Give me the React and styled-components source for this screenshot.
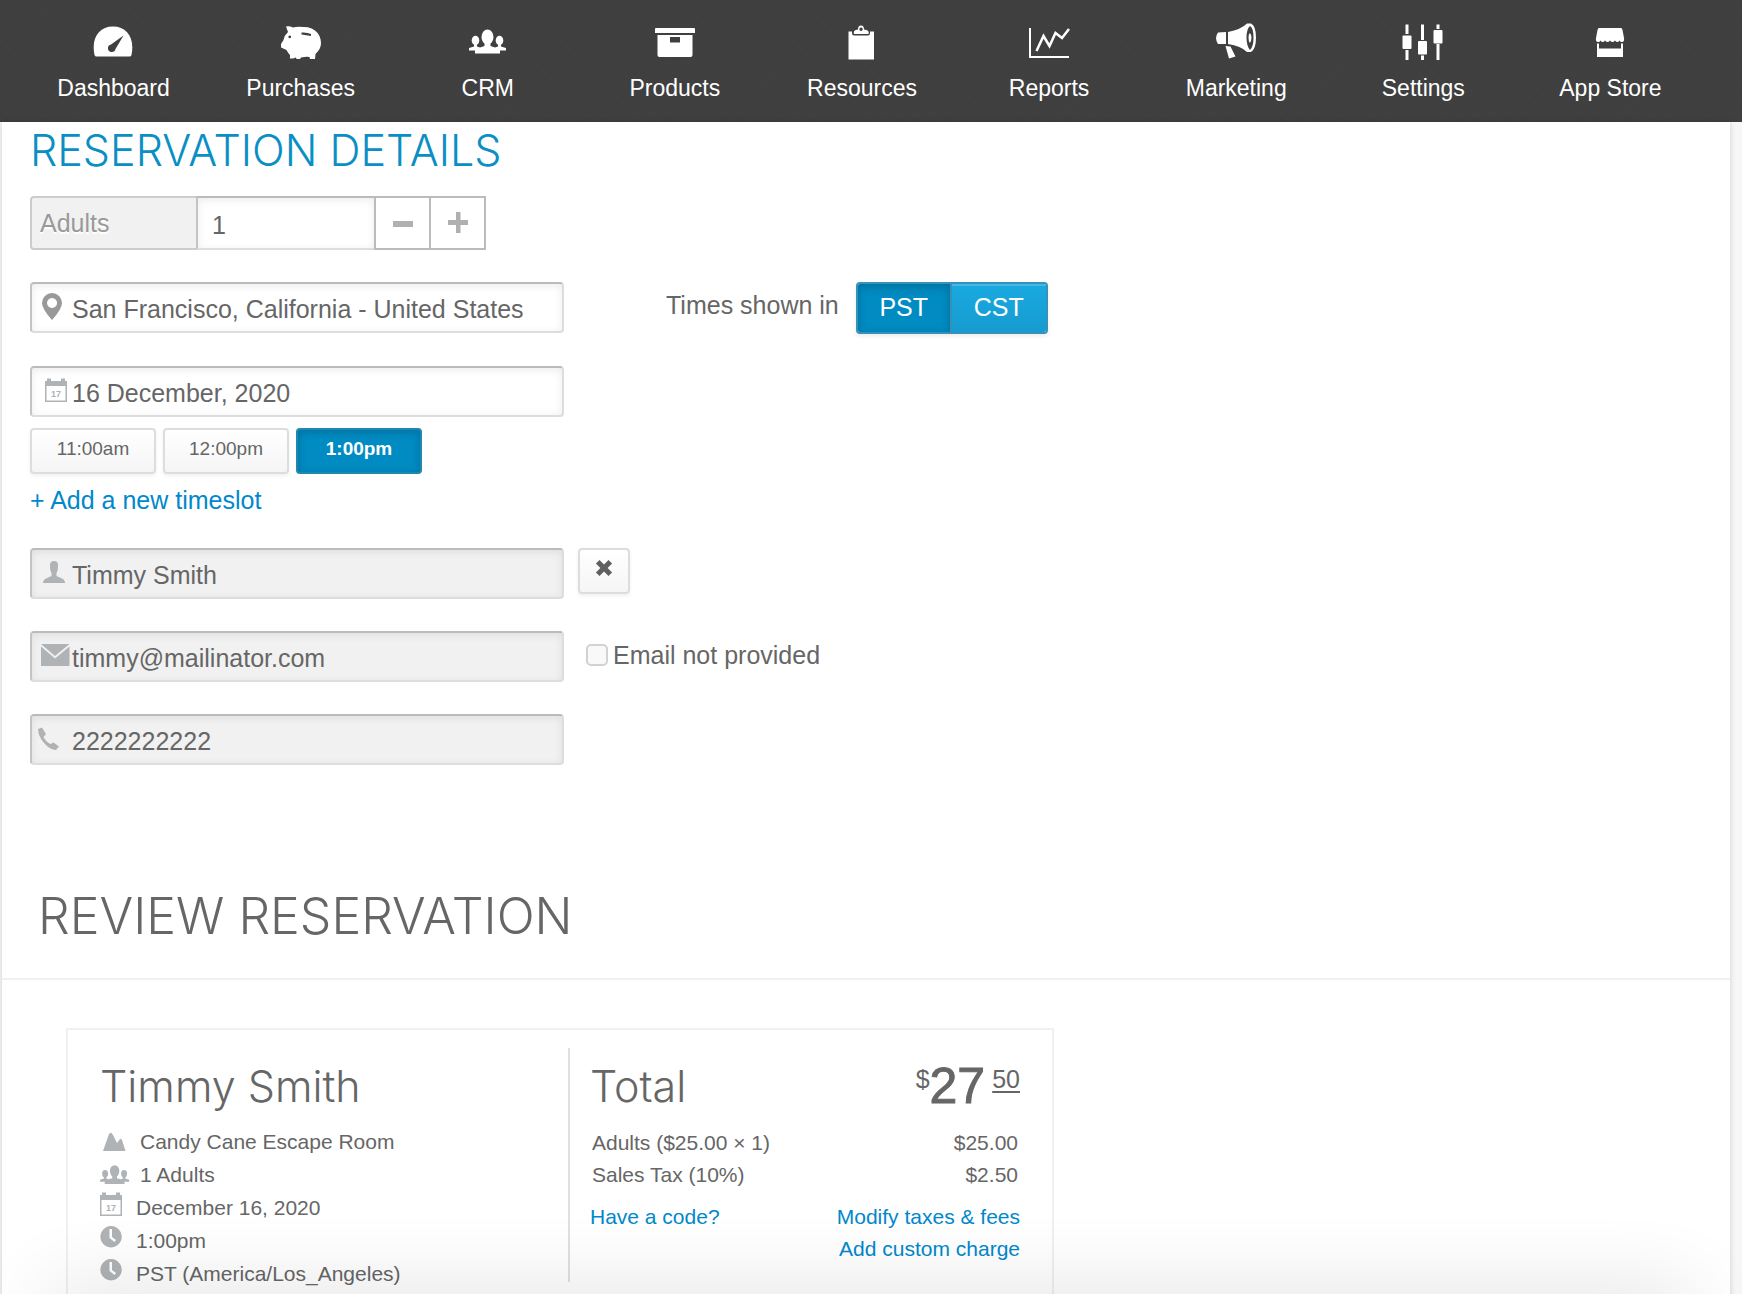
import React, { useId, useState } from 'react';
import styled, { createGlobalStyle, css } from 'styled-components';

const GlobalStyle = createGlobalStyle`
  * {
    box-sizing: border-box;
  }
  body {
    margin: 0;
    background: #f7f7f7;
    color: #666;
    font-family: 'Liberation Sans', Arial, sans-serif;
    font-size: 25px;
    line-height: 32px;
  }
  button, input {
    font-family: inherit;
    font-size: inherit;
    color: inherit;
  }
  a {
    color: #0088cc;
    text-decoration: none;
  }
`;

const Page = styled.div`
  height: 100vh;
  overflow: hidden;
  display: flex;
  flex-direction: column;
`;

const Nav = styled.nav`
  display: flex;
  flex: none;
  height: 122px;
  padding: 0 38px 0 20px;
  background-color: #3f3f3f;
  background-image:
    repeating-linear-gradient(45deg, rgba(255, 255, 255, 0.01) 0 1px, transparent 1px 3px),
    repeating-linear-gradient(-45deg, rgba(0, 0, 0, 0.02) 0 1px, transparent 1px 4px);
`;

const NavLink = styled.a`
  flex: 1;
  display: flex;
  flex-direction: column;
  align-items: center;
  gap: 10px;
  padding-top: 18px;
  color: #fff;
  font-size: 23px;
  svg {
    width: 44px;
    height: 44px;
    fill: #fff;
  }
`;

const Panel = styled.main`
  flex: none;
  margin: 0 12px 0 2px;
  background: #fff;
  box-shadow: 0 0 6px rgba(0, 0, 0, 0.16);
`;

const Details = styled.section`
  display: flex;
  flex-direction: column;
  align-items: flex-start;
  padding: 0 28px;
`;

const Heading = styled.h2`
  margin: 0;
  font-family: Inter, 'Open Sans', sans-serif;
  font-weight: 300;
  font-size: ${p => (p.$large ? '50px' : '43px')};
  line-height: 56px;
  color: ${p => (p.$accent ? '#0a8fc4' : '#666')};
`;

const Line = styled.div`
  display: flex;
  align-items: flex-start;
  gap: ${p => p.$gap || 0}px;
  margin-top: ${p => p.$top}px;
`;

const boxBorder = css`
  border: 2px solid #ddd;
  border-top-color: #bbb;
  border-left-color: #c4c4c4;
  border-radius: 4px;
  box-shadow: inset 0 2px 8px rgba(0, 0, 0, 0.08);
`;

const Field = styled.label`
  ${boxBorder}
  display: flex;
  align-items: center;
  width: 534px;
  height: 51px;
  padding: 0 10px 0 8px;
  background: ${p => (p.$filled ? '#f1f1f1' : '#fff')};
  svg {
    flex: none;
    overflow: visible;
    width: 32px;
    height: 32px;
    margin-bottom: 4px;
    fill: ${p => p.$tone || '#afb3b6'};
  }
  input {
    flex: 1;
    min-width: 0;
    height: 40px;
    margin-top: 4px;
    padding: 0;
    border: 0;
    outline: 0;
    background: none;
  }
`;

const Counter = styled.div`
  display: flex;
  height: 54px;
  label {
    width: 168px;
    padding: 9px 8px;
    border: 2px solid #ccc;
    border-radius: 4px 0 0 4px;
    background: #f1f1f1;
    color: #999;
    text-shadow: 0 2px 0 #fff;
  }
  input {
    ${boxBorder}
    width: 180px;
    margin-left: -2px;
    padding: 4px 14px 0;
    border-radius: 0;
    outline: 0;
  }
`;

const StepButton = styled.button`
  display: flex;
  align-items: center;
  justify-content: center;
  width: 57px;
  margin-left: -2px;
  padding: 0;
  border: 2px solid #bbb;
  background: #fff;
  svg {
    width: 20px;
    height: 24px;
    fill: #b0b0b0;
  }
`;

const PlainButton = styled.button`
  display: flex;
  align-items: center;
  justify-content: center;
  min-width: ${p => p.$width}px;
  height: 46px;
  padding: 0 0 4px;
  border: 2px solid ${p => (p.$active ? '#2187b0' : '#ddd')};
  border-radius: 4px;
  background: ${p => (p.$active ? '#008bc2' : 'linear-gradient(#fff, #f5f5f5)')};
  box-shadow: ${p => (p.$active ? 'inset 0 2px 8px rgba(0, 0, 0, 0.2)' : '0 2px 4px rgba(0, 0, 0, 0.06)')};
  color: ${p => (p.$active ? '#fff' : '#666')};
  font-size: 19px;
  font-weight: ${p => (p.$active ? 700 : 400)};
  svg {
    width: 18px;
    height: 18px;
    margin-bottom: 2px;
    fill: #606060;
  }
`;

const Slots = styled.div`
  display: flex;
  gap: 7px;
  margin-top: 11px;
`;

const AddLink = styled.a`
  margin-top: 10px;
`;

const ZoneLabel = styled.span`
  margin: 7px 17px 0 102px;
`;

const ZoneGroup = styled.div`
  display: flex;
  height: 52px;
  border: 2px solid #3592bb;
  border-radius: 4px;
  overflow: hidden;
  box-shadow: 0 2px 4px rgba(0, 0, 0, 0.08);
`;

const ZoneButton = styled.button`
  width: 94px;
  padding: 0 0 2px;
  border: 0;
  color: #fff;
  background: linear-gradient(#19aae1, #169bcf);
  box-shadow: inset 0 2px 0 #47b8e3;
  ${p =>
    p.$active &&
    css`
      border-right: 2px solid #3a8fb5;
      background: #008bc2;
      box-shadow: inset 0 3px 10px rgba(0, 0, 0, 0.2);
    `}
`;

const CheckLabel = styled.label`
  display: flex;
  align-items: center;
  gap: 5px;
  margin: 8px 0 0 22px;
  input {
    appearance: none;
    width: 22px;
    height: 22px;
    margin: 0;
    border: 2px solid #d2d2d2;
    border-radius: 5px;
    background: #f9f9f9;
  }
  input:checked {
    background: #0088cc;
  }
`;

const ReviewHead = styled.header`
  margin-top: 123px;
  padding: 0 36px 34px;
  border-bottom: 2px solid #f0f0f0;
`;

const Card = styled.article`
  display: flex;
  width: 988px;
  margin: 48px 0 0 64px;
  padding: 18px 32px 18px;
  border: 2px solid #f0f0f0;
  font-size: 21px;
`;

const Guest = styled.div`
  width: 470px;
  height: 234px;
  border-right: 2px solid #e0e0e0;
  padding-top: 10px;
  ul {
    margin: 11px 0 0;
    padding: 0;
    list-style: none;
  }
`;

const GuestLine = styled.li`
  display: flex;
  align-items: center;
  gap: ${p => (p.$raised ? 6 : 10)}px;
  height: 33px;
  svg {
    flex: none;
    width: 30px;
    height: 28px;
    margin-bottom: ${p => (p.$raised ? 8 : 0)}px;
    fill: #afb3b6;
  }
`;

const Bill = styled.div`
  flex: 1;
  margin-left: 20px;
  padding-top: 10px;
`;

const BillTop = styled.div`
  display: flex;
  justify-content: space-between;
`;

const Price = styled.div`
  display: flex;
  align-items: flex-start;
  font-size: 25px;
  strong {
    font-size: 50px;
    font-weight: 400;
    line-height: 56px;
    -webkit-text-stroke: 1px #666;
  }
  span {
    margin-top: 5px;
  }
  u {
    margin: 5px 0 0 7px;
    text-decoration-thickness: 2px;
    text-underline-offset: 3px;
  }
`;

const Charges = styled.table`
  width: 100%;
  margin-top: 13px;
  border-collapse: collapse;
  td {
    padding: 0 2px;
    height: 32px;
  }
  td:last-child {
    text-align: right;
  }
`;

const BillLinks = styled.div`
  display: flex;
  justify-content: space-between;
  margin-top: 10px;
  div {
    display: flex;
    flex-direction: column;
    align-items: flex-end;
  }
`;

const FoldShade = styled.div`
  position: fixed;
  right: 50px;
  bottom: -40px;
  left: 50px;
  height: 40px;
  box-shadow: 0 0 80px rgba(0, 0, 0, 0.16);
  pointer-events: none;
`;

const Gauge = () => (
  <svg viewBox="0 0 44 44">
    <path
      fillRule="evenodd"
      d="M2.500 37C-1 20 7 8.500 21 8.500S43 20 39.500 37Q39 38.500 37.500 38.500H4.500Q3 38.500 2.500 37ZM31.500 17.500L19 26.500A3.800 3.800 0 1 0 23.500 31Z"
    />
  </svg>
);

const Pig = () => (
  <svg viewBox="0 0 44 44">
    <path
      fillRule="evenodd"
      d="M7 8.500Q10 7.500 14 9.500Q18 8.500 24 9C35 8.500 42 16 42 25Q42 31 36.500 36L36 41H31L30.500 39Q27 38.500 22 39.500L21 41H17.500L17 39.500L14 40.500H11V37Q9 35 7.500 32L2 29.500V26L4.500 22Q5.500 17 9 14ZM22.500 14.500V16.500L32 18V16Q28 14 22.500 14.500ZM10.700 17.500a1.400 1.400 0 1 0 .1 0Z"
    />
  </svg>
);

const People = ({ viewBox = '0 0 44 44' }) => (
  <svg viewBox={viewBox}>
    <ellipse cx="21.500" cy="19" rx="6" ry="7.500" />
    <ellipse cx="9.500" cy="22.500" rx="3.800" ry="4.700" />
    <ellipse cx="33.500" cy="22.500" rx="3.800" ry="4.700" />
    <path d="M3 32.500V30L8 28.500V26H11V28.500L14 29.500L18.500 28V25H24.500V28L29 29.500L32 28.500V26H35V28.500L40 30V32.500H34V35.500H9V32.500Z" />
  </svg>
);

const Box = () => (
  <svg viewBox="0 0 44 44">
    <path
      fillRule="evenodd"
      d="M3 10H41Q42 10 42 11V15H2V11Q2 10 3 10ZM4.500 17H39.500V37Q39.500 39 37.500 39H6.500Q4.500 39 4.500 37ZM17 19V24.500H27V19Z"
    />
  </svg>
);

const Clipboard = () => (
  <svg viewBox="0 0 44 44">
    <path
      fillRule="evenodd"
      d="M8.500 13.500H12V15Q12 17.500 14 17.500H28Q30 17.500 30 15V13.500H34V41.500H8.500ZM14 16Q12.500 12 18 11.500Q18 7.500 21 7.500T24 11.500Q30 12 28.500 16ZM21 9.500a1.700 1.700 0 1 0 .1 0Z"
    />
  </svg>
);

const Chart = () => (
  <svg viewBox="0 0 44 44" strokeWidth="2" stroke="#fff">
    <path d="M3 10V39H42" fill="none" />
    <path d="M9.500 33L16.500 18L22.500 28L28.500 15L35 20L42 11" fill="none" strokeWidth="2.500" />
  </svg>
);

const Horn = () => (
  <svg viewBox="0 0 44 44">
    <path d="M4 14.500L12 14V26H4Q0 20 4 14.500ZM11.500 28L16.500 28.500L21.500 38.500L15 40.500Z" />
    <path
      fillRule="evenodd"
      d="M14 14Q27 11.500 33 5.500H37Q42 8 42 19.500T37 34H33Q27 28 14 26ZM36 8Q32.500 11 32.500 19.500T36 32Q39.500 29 39.500 19.500T36 8ZM35.800 15Q37.500 16 37.500 19.500T35.800 25Q34.500 23 34.500 19.500T35.800 15Z"
    />
  </svg>
);

const Sliders = () => (
  <svg viewBox="0 0 44 44">
    <path d="M4.500 6.500H7.500V16H4.500ZM4.500 32H7.500V42H4.500ZM20 6.500H23V22H20ZM20 37.500H23V42H20ZM35.500 6.500H38.500V11H35.500ZM35.500 26H38.500V42H35.500Z" />
    <rect x="1.500" y="17.500" width="9" height="13.500" rx="1" />
    <rect x="17" y="23" width="9" height="13.500" rx="1" />
    <rect x="32.500" y="12" width="9" height="13.500" rx="1" />
  </svg>
);

const Shop = () => (
  <svg viewBox="0 0 44 44">
    <path d="M11 10H33Q34 10 34.500 12L36 20Q36.500 23.500 34.500 24T31.500 22.500Q29.500 25.500 27 22.500Q24.500 25.500 22 22.500Q19.500 25.500 17 22.500Q14.500 25.500 12.500 22.500Q11.500 24.500 9.500 24T8 20L9.500 12Q10 10 11 10ZM9 25.500H11V30.500H33V25.500H35V39H9Z" />
  </svg>
);

const Pin = () => (
  <svg viewBox="0 0 32 32">
    <path fillRule="evenodd" d="M12 3A10 10 0 0 1 22 13Q22 19 12 30Q2 19 2 13A10 10 0 0 1 12 3ZM12 8A5 5 0 1 0 12.100 8Z" />
  </svg>
);

const Calendar = ({ viewBox = '0 0 32 32' }) => (
  <svg viewBox={viewBox}>
    <path
      fillRule="evenodd"
      d="M5 7H7V4.500H11V7H21V4.500H25V7H27V28H5ZM6.500 12V26.500H25.500V12Z"
    />
    <text x="16" y="23" fontSize="9" fontWeight="700" textAnchor="middle">
      17
    </text>
  </svg>
);

const Person = () => (
  <svg viewBox="0 0 32 32">
    <path d="M10 9Q10 5 14 5T18 9Q18 15 16.500 17V20L22 22.500Q25 24 25 27H3Q3 24 6 22.500L11.500 20V17Q10 15 10 9Z" />
  </svg>
);

const Mail = () => (
  <svg viewBox="0 0 32 32">
    <path d="M1 5H29.500L15 17ZM1 7.500V27H29.500V7.500L15 19.500Z" />
  </svg>
);

const Phone = () => (
  <svg viewBox="3 0 32 32">
    <path d="M1 7L5 5.500L9 12L6.500 15Q9 20 13.500 22L16.500 20.500L22 24.500L19 28Q13 28 7 21T1 7Z" />
  </svg>
);

const Mountain = () => (
  <svg viewBox="0 0 30 28">
    <path d="M3 23L9 6L11 4.500L13 7L17 15L20.500 10.500L22 12L25.500 23Z" />
  </svg>
);

const Clock = () => (
  <svg viewBox="0 0 30 28">
    <path fillRule="evenodd" d="M11 3A10.700 10.700 0 1 0 11.100 3ZM9.500 6H12V14L16 17L14.500 19L9.500 15Z" />
  </svg>
);

const Minus = () => (
  <svg viewBox="0 0 20 24">
    <path d="M0 10H20V16H0Z" />
  </svg>
);

const Plus = () => (
  <svg viewBox="0 0 20 24">
    <path d="M0 9H8V1H12.500V9H20V14H12.500V22H8V14H0Z" />
  </svg>
);

const Cross = () => (
  <svg viewBox="0 0 20 20">
    <path d="M5 1L10 6L15 1L19 5L14 10L19 15L15 19L10 14L5 19L1 15L6 10L1 5Z" />
  </svg>
);

const navItems = [
  ['Dashboard', Gauge],
  ['Purchases', Pig],
  ['CRM', People],
  ['Products', Box],
  ['Resources', Clipboard],
  ['Reports', Chart],
  ['Marketing', Horn],
  ['Settings', Sliders],
  ['App Store', Shop],
];

const slots = ['11:00am', '12:00pm', '1:00pm'];

const guestLines = [
  { text: 'Candy Cane Escape Room', icon: <Mountain /> },
  { text: '1 Adults', icon: <People viewBox="3 9 38 30" /> },
  { text: 'December 16, 2020', icon: <Calendar viewBox="5 2 30 28" />, raised: true },
  { text: '1:00pm', icon: <Clock />, raised: true },
  { text: 'PST (America/Los_Angeles)', icon: <Clock />, raised: true },
];

function TextField({ icon: Icon, label, value, filled, tone }) {
  return (
    <Field $filled={filled} $tone={tone}>
      <Icon />
      <input type="text" aria-label={label} defaultValue={value} />
    </Field>
  );
}

export default function App() {
  const adultsId = useId();
  const [adults, setAdults] = useState(1);
  const [slot, setSlot] = useState('1:00pm');
  const [zone, setZone] = useState('PST');

  return (
    <Page>
      <GlobalStyle />
      <Nav>
        {navItems.map(([label, Icon]) => (
          <NavLink href="#" key={label}>
            <Icon />
            <span>{label}</span>
          </NavLink>
        ))}
      </Nav>
      <Panel>
        <Details>
          <Heading $accent>RESERVATION DETAILS</Heading>
          <Line $top={18}>
            <Counter>
              <label htmlFor={adultsId}>Adults</label>
              <input id={adultsId} value={adults} onChange={e => setAdults(Number(e.target.value) || 0)} />
              <StepButton aria-label="Fewer adults" onClick={() => setAdults(Math.max(0, adults - 1))}>
                <Minus />
              </StepButton>
              <StepButton aria-label="More adults" onClick={() => setAdults(adults + 1)}>
                <Plus />
              </StepButton>
            </Counter>
          </Line>
          <Line $top={32}>
            <TextField
              icon={Pin}
              label="Location"
              value="San Francisco, California - United States"
              tone="#999"
            />
            <ZoneLabel>Times shown in</ZoneLabel>
            <ZoneGroup>
              {['PST', 'CST'].map(name => (
                <ZoneButton key={name} $active={zone === name} onClick={() => setZone(name)}>
                  {name}
                </ZoneButton>
              ))}
            </ZoneGroup>
          </Line>
          <Line $top={32}>
            <TextField icon={Calendar} label="Date" value="16 December, 2020" />
          </Line>
          <Slots>
            {slots.map(time => (
              <PlainButton key={time} $width={126} $active={slot === time} onClick={() => setSlot(time)}>
                {time}
              </PlainButton>
            ))}
          </Slots>
          <AddLink href="#">+ Add a new timeslot</AddLink>
          <Line $top={32} $gap={14}>
            <TextField icon={Person} label="Name" value="Timmy Smith" filled />
            <PlainButton $width={52} aria-label="Remove guest">
              <Cross />
            </PlainButton>
          </Line>
          <Line $top={32}>
            <TextField icon={Mail} label="Email" value="timmy@mailinator.com" filled />
            <CheckLabel>
              <input type="checkbox" />
              Email not provided
            </CheckLabel>
          </Line>
          <Line $top={32}>
            <TextField icon={Phone} label="Phone" value="2222222222" filled />
          </Line>
        </Details>
        <ReviewHead>
          <Heading $large>REVIEW RESERVATION</Heading>
        </ReviewHead>
        <Card>
          <Guest>
            <Heading>Timmy Smith</Heading>
            <ul>
              {guestLines.map(({ text, icon, raised }) => (
                <GuestLine key={text} $raised={raised}>
                  {icon}
                  {text}
                </GuestLine>
              ))}
            </ul>
          </Guest>
          <Bill>
            <BillTop>
              <Heading>Total</Heading>
              <Price>
                <span>$</span>
                <strong>27</strong>
                <u>50</u>
              </Price>
            </BillTop>
            <Charges>
              <tbody>
                <tr>
                  <td>Adults ($25.00 × 1)</td>
                  <td>$25.00</td>
                </tr>
                <tr>
                  <td>Sales Tax (10%)</td>
                  <td>$2.50</td>
                </tr>
              </tbody>
            </Charges>
            <BillLinks>
              <a href="#">Have a code?</a>
              <div>
                <a href="#">Modify taxes &amp; fees</a>
                <a href="#">Add custom charge</a>
              </div>
            </BillLinks>
          </Bill>
        </Card>
      </Panel>
      <FoldShade />
    </Page>
  );
}
